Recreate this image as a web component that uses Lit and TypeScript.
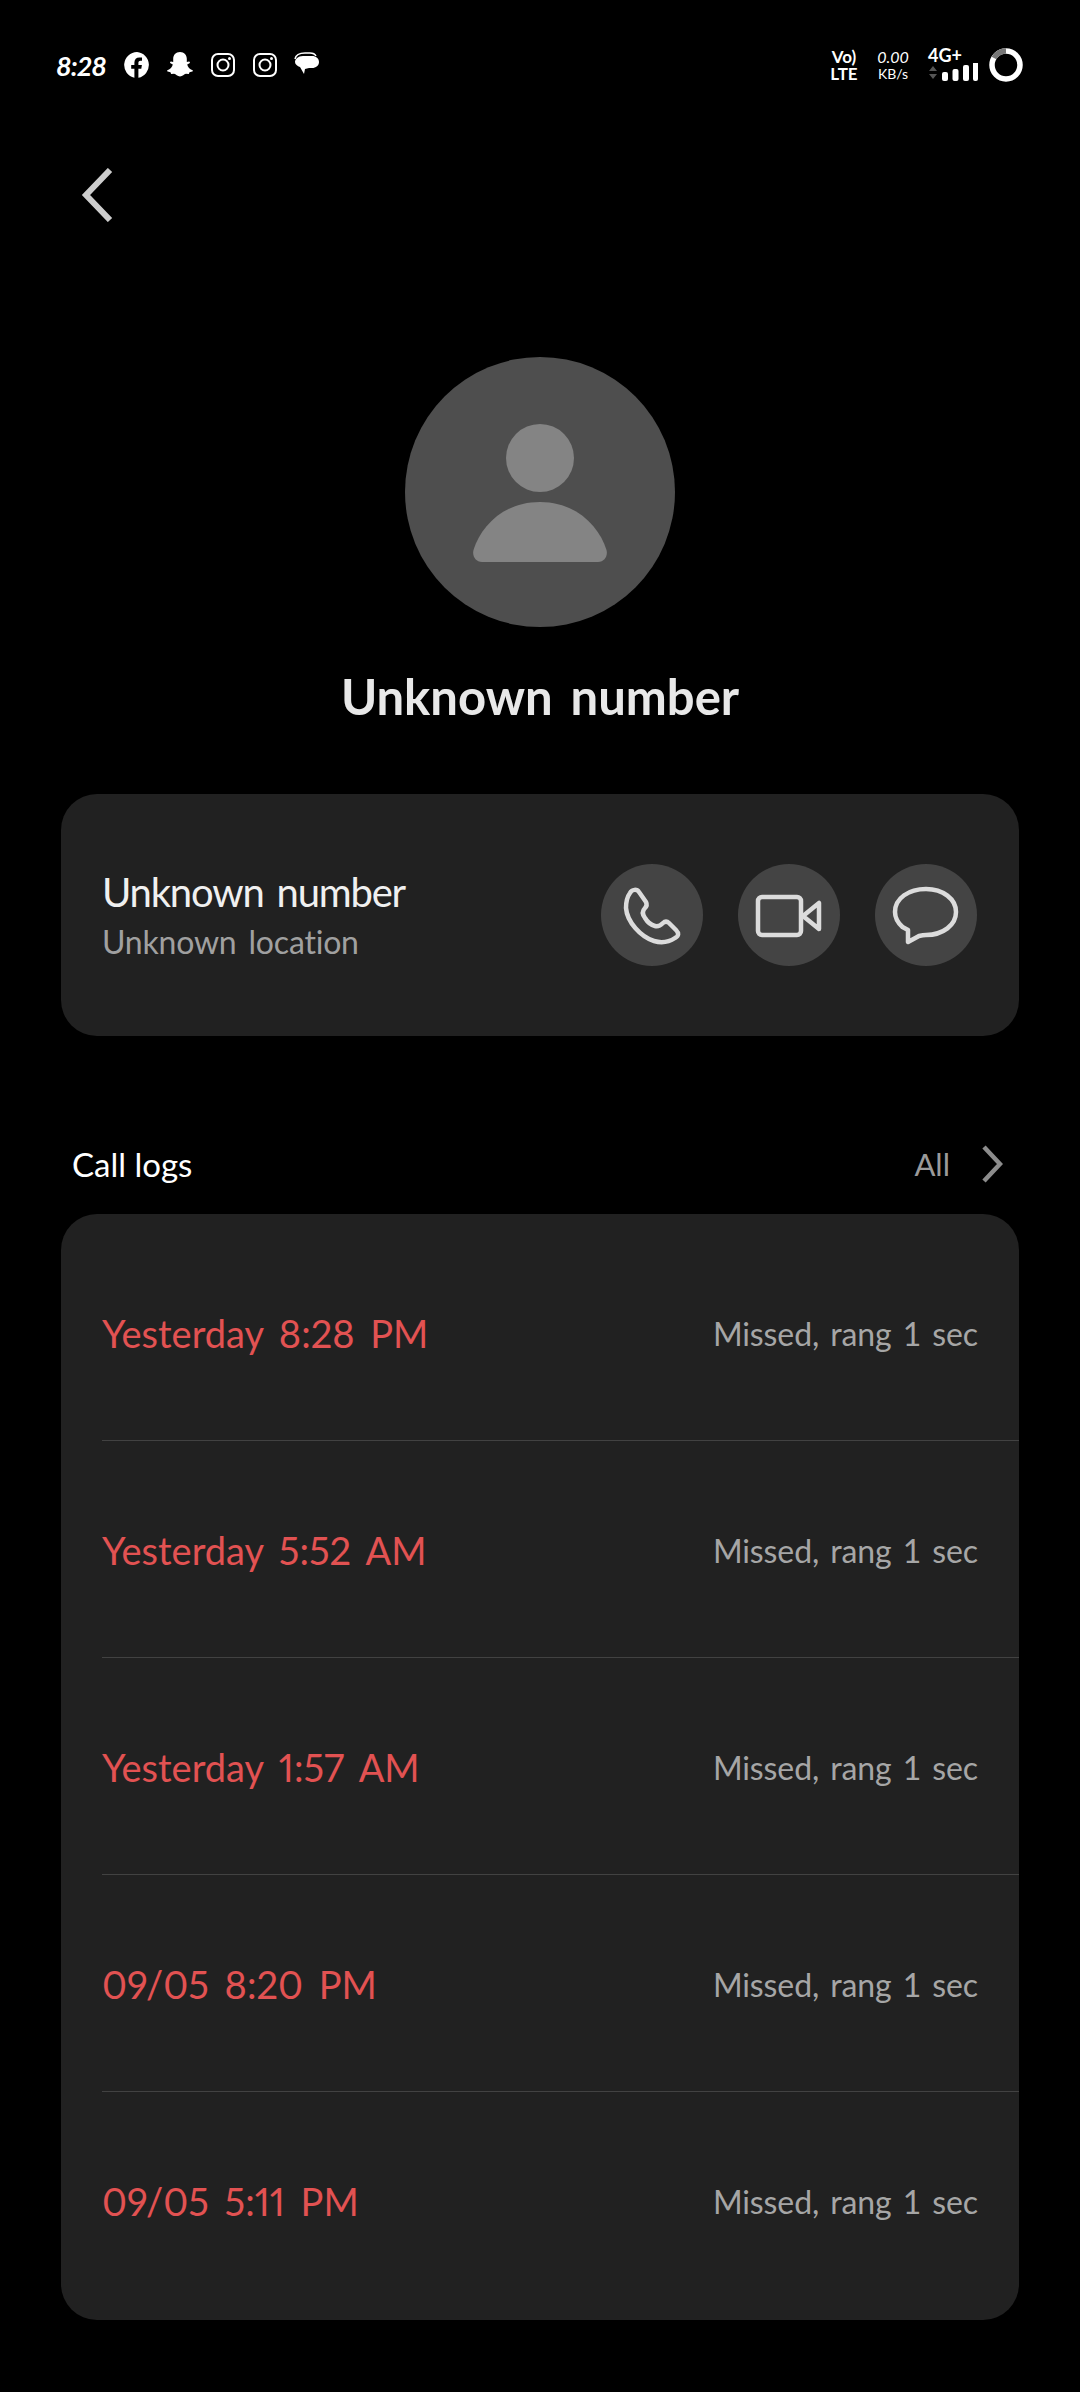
import { LitElement, html, css, svg } from "lit";
import { customElement } from "lit/decorators.js";

const logs = [
  "Yesterday 8:28 PM",
  "Yesterday 5:52 AM",
  "Yesterday 1:57 AM",
  "09/05 8:20 PM",
  "09/05 5:11 PM",
];

const instagram = svg`
  <rect x="2" y="2" width="22" height="22" rx="6" fill="none" stroke="#fff" stroke-width="2"/>
  <circle cx="13" cy="13" r="5.5" fill="none" stroke="#fff" stroke-width="2"/>
  <circle cx="19.5" cy="6.5" r="1.5" fill="#fff"/>`;

@customElement("app-root")
export class AppRoot extends LitElement {
  static styles = css`
    :host {
      display: block;
      width: 1080px;
      height: 2392px;
      background: #000;
      color: #fff;
      font-family: Lato, "Liberation Sans", sans-serif;
      overflow: hidden;
    }

    svg {
      display: block;
      flex: none;
    }

    .status {
      display: flex;
      justify-content: space-between;
      align-items: center;
      height: 40px;
      padding: 45px 57px 0 56px;
    }

    .status-left,
    .status-right {
      display: flex;
      align-items: center;
    }

    .status-left {
      gap: 16px;
    }

    .time {
      font-size: 27px;
      font-weight: 700;
      font-style: italic;
      letter-spacing: -1px;
      width: 50px;
      margin-right: 2px;
    }

    .volte,
    .speed {
      display: flex;
      flex-direction: column;
      align-items: center;
      line-height: 17px;
    }

    .volte {
      font-weight: 700;
      font-size: 17px;
      width: 30px;
    }

    .speed {
      width: 30px;
      margin-left: 19px;
      font-size: 14px;
    }

    .speed i {
      font-size: 16px;
    }

    .net {
      display: flex;
      flex-direction: column;
      margin-left: 20px;
      width: 52px;
    }

    .net b {
      font-size: 18px;
      line-height: 15px;
    }

    .ring {
      margin-left: 9px;
    }

    .back {
      margin: 83px 0 0 80px;
    }

    .avatar {
      width: 270px;
      height: 270px;
      margin: 135px auto 0;
      border-radius: 50%;
      background: #4e4e4e;
      display: flex;
      align-items: center;
      justify-content: center;
    }

    h1 {
      margin: 32px 0 0;
      height: 74px;
      font-size: 49px;
      line-height: 74px;
      font-weight: 700;
      text-align: center;
      color: #e8e8e8;
      word-spacing: 6px;
    }

    .card {
      margin: 0 61px;
      background: #212121;
      border-radius: 36px;
    }

    .contact {
      margin-top: 61px;
      height: 242px;
      padding: 0 42px 0 41px;
      display: flex;
      align-items: center;
      justify-content: space-between;
    }

    .name {
      font-size: 40px;
      line-height: 50px;
      letter-spacing: -1.2px;
      color: #f0f0f0;
      word-spacing: 4px;
    }

    .place {
      margin-top: 4px;
      font-size: 32px;
      line-height: 42px;
      letter-spacing: -0.2px;
      color: #a0a0a0;
      word-spacing: 4px;
    }

    .actions {
      display: flex;
      gap: 35px;
    }

    .action {
      width: 102px;
      height: 102px;
      border-radius: 50%;
      background: #444;
    }

    .logs-head {
      height: 72px;
      margin-top: 92px;
      padding: 0 72px;
      display: flex;
      align-items: center;
      justify-content: space-between;
      font-size: 33px;
    }

    .all {
      display: flex;
      align-items: center;
      gap: 31px;
      color: #9a9a9a;
      font-size: 31px;
      margin-right: 5px;
    }

    .logs {
      margin-top: 14px;
      padding: 10px 0 12px 41px;
      overflow: hidden;
    }

    .row {
      height: 217px;
      padding: 2px 41px 0 0;
      box-sizing: border-box;
      display: flex;
      align-items: center;
      justify-content: space-between;
      border-top: 1px solid #424242;
    }

    .row:first-child {
      height: 216px;
      border-top: none;
    }

    .when {
      font-size: 38px;
      color: #e25252;
      word-spacing: 6px;
      font-variant-numeric: proportional-nums;
    }

    .what {
      font-size: 32px;
      letter-spacing: -0.1px;
      color: #a6a6a6;
      word-spacing: 3px;
    }
  `;

  render() {
    return html`
      <div class="status">
        <div class="status-left">
          <span class="time">8:28</span>
          <svg width="26" height="26" viewBox="0 0 26 26">
            <path fill="#fff" d="M13 0a13 13 0 0 0-2.6 25.7v-9H7.2V13h3.2v-2.5c0-3.3 2-5.1 4.9-5.1 1.4 0 2.7.2 2.7.2v3.1h-1.5c-1.6 0-2.1 1-2.1 2V13h3.5l-.6 3.7h-2.9v9A13 13 0 0 0 13 0z"/>
          </svg>
          <svg width="28" height="28" viewBox="0 0 28 28">
            <path fill="#fff" d="M14 1c4.300 0 6.800 3 6.800 6.800v3.200l2.200-.4c1 0 1.300 1.100.5 1.700l-2.300 1.300c.5 2.600 2.500 4.700 5.300 5.700.7.300.5 1.100-.2 1.300l-2.800.7-.6 1.700-3-.2c-1.800.2-3.300 2.700-5.900 2.700s-4.100-2.500-5.900-2.700l-3 .2-.6-1.700-2.800-.7c-.7-.2-.9-1-.2-1.300 2.800-1 4.800-3.100 5.300-5.700l-2.300-1.300c-.8-.6-.5-1.700.5-1.700l2.200.4V7.800C7.200 4 9.700 1 14 1z"/>
          </svg>
          <svg width="26" height="26" viewBox="0 0 26 26">${instagram}</svg>
          <svg width="26" height="26" viewBox="0 0 26 26">${instagram}</svg>
          <svg width="26" height="26" viewBox="0 0 26 26">
            <path fill="none" stroke="#fff" stroke-width="1.500" d="M1 7C2 2 6 1 11 1h5c3 0 5 1 6 3"/>
            <path fill="#fff" d="M9 4h9c4 0 7 2.500 7 6s-3 6-7 6h-3l-4 1 -1 5-4-7C3.500 14 1 12.500 1 10s3-6 8-6z"/>
          </svg>
        </div>
        <div class="status-right">
          <div class="volte"><span>Vo)</span><span>LTE</span></div>
          <div class="speed"><i>0.00</i><span>KB/s</span></div>
          <div class="net">
            <b>4G+</b>
            <svg width="50" height="20" viewBox="0 0 50 20">
              <path fill="#555" d="M1 8l4-5 4 5zM1 11l4 5 4-5z"/>
              <rect x="14" y="9" width="6" height="9" rx="2" fill="#fff"/>
              <rect x="24.500" y="6" width="6" height="12" rx="2" fill="#fff"/>
              <rect x="35" y="2" width="6" height="16" rx="2" fill="#fff"/>
              <rect x="45" y="-3" width="5" height="21" rx="2" fill="#fff"/>
            </svg>
          </div>
          <svg class="ring" width="34" height="34" viewBox="0 0 34 34">
            <circle cx="17" cy="17" r="14" fill="none" stroke="#fff" stroke-width="5.500"/>
            <path d="M17 3A14 14 0 0 0 5 10" fill="none" stroke="#777" stroke-width="5.500"/>
          </svg>
        </div>
      </div>

      <svg class="back" width="34" height="54" viewBox="0 0 34 54">
        <path d="M30 2 6 27l24 25" fill="none" stroke="#cdcdcd" stroke-width="6"/>
      </svg>

      <div class="avatar">
        <svg width="134" height="140" viewBox="0 0 134 140">
          <circle cx="67" cy="36" r="34" fill="#848484"/>
          <path fill="#848484" d="M67 80c36 0 59 24 66.500 48 1.500 6-2 12-8.500 12H9c-6.500 0-10-6-8.500-12C8 104 31 80 67 80z"/>
        </svg>
      </div>

      <h1>Unknown number</h1>

      <div class="card contact">
        <div>
          <div class="name">Unknown number</div>
          <div class="place">Unknown location</div>
        </div>
        <div class="actions">
          <div class="action">
            <svg width="102" height="102" viewBox="0 0 102 102" fill="none" stroke="#dcdcdc" stroke-width="4.500" stroke-linejoin="round">
              <path d="M29 29C31 25 36 25 38 28l7 10c1 2 1 4-1 6-3 3-3 6 0 10 3 5 6 7 10 8 3 1 6-1 8-3 2-2 4-2 6 0l7 7c3 3 3 6-1 8-6 4-14 5-21 3C40 73 26 58 25 44c0-6 1-11 4-15z"/>
            </svg>
          </div>
          <div class="action">
            <svg width="102" height="102" viewBox="0 0 102 102" fill="none" stroke="#dcdcdc" stroke-width="4.500" stroke-linejoin="round">
              <rect x="20" y="33" width="43" height="38" rx="4"/>
              <path d="M65 52l16-13v26z"/>
            </svg>
          </div>
          <div class="action">
            <svg width="102" height="102" viewBox="0 0 102 102" fill="none" stroke="#dcdcdc" stroke-width="4.500" stroke-linejoin="round">
              <path d="M27.500 63C22 58 20 54 20 48c0-14 14-23 31-23s30 10 30 23-13 23-30 23c-3 0-5 .5-7 1l-11 6v-12z"/>
            </svg>
          </div>
        </div>
      </div>

      <div class="logs-head">
        <span>Call logs</span>
        <span class="all">
          All
          <svg width="22" height="38" viewBox="0 0 22 38">
            <path d="M3 2l16 17L3 36" fill="none" stroke="#8c8c8c" stroke-width="4.500"/>
          </svg>
        </span>
      </div>

      <div class="card logs">
        ${logs.map(
          (when) => html`
            <div class="row">
              <span class="when">${when}</span>
              <span class="what">Missed, rang 1 sec</span>
            </div>
          `
        )}
      </div>
    `;
  }
}
